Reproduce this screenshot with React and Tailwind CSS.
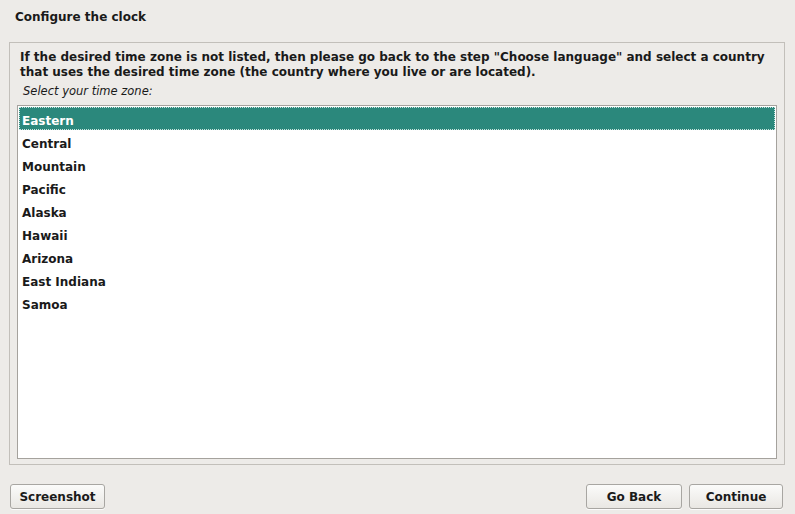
import React from "react";

const zones = ["Eastern","Central","Mountain","Pacific","Alaska","Hawaii","Arizona","East Indiana","Samoa"];

function Btn({ children, className = "" }) {
  return (
    <button className={"h-[25px] rounded-[3px] border border-[#a8a6a2] bg-gradient-to-b from-[#fbfbfa] to-[#e9e7e3] text-[12px] font-bold text-[#1a1a1a] leading-none shadow-[0_1px_0_rgba(255,255,255,0.8)] " + className}>
      {children}
    </button>
  );
}

export default function App() {
  return (
    <div className="w-[795px] h-[514px] bg-[#edebe8] flex flex-col text-[#1a1a1a]" style={{ fontFamily: '"DejaVu Sans", sans-serif' }}>
      <div className="pl-[15px] pt-[9px] h-[42px] text-[12px] leading-[16px] font-bold">Configure the clock</div>
      <div className="ml-[9px] mr-[10px] h-[423px] border border-[#c2bfba] flex flex-col pl-[10px] pr-[7px] pt-[7px] pb-[5px]">
        <p className="text-[12px] leading-[15px] font-bold">
          If the desired time zone is not listed, then please go back to the step "Choose language" and select a country that uses the desired time zone (the country where you live or are located).
        </p>
        <div className="pl-[3px] pt-[3px] text-[11.5px] leading-[16px] italic">Select your time zone:</div>
        <div className="mt-[6px] ml-[-3px] flex-1 border border-[#a5a29d] bg-white p-px">
          {zones.map((z, i) => (
            <div
              key={z}
              className={
                "h-[23px] pt-[4px] flex items-center text-[12px] font-bold " +
                (i === 0 ? "bg-[#2b887c] text-white border border-dotted border-[#c8e4de] pl-[2px]" : "pl-[3px]")
              }
            >
              {z}
            </div>
          ))}
        </div>
      </div>
      <div className="flex items-start pt-[19px] pl-[10px] pr-[12px]">
        <Btn className="w-[95px]">Screenshot</Btn>
        <div className="flex-1" />
        <Btn className="w-[96px]">Go Back</Btn>
        <Btn className="w-[94px] ml-[7px]">Continue</Btn>
      </div>
    </div>
  );
}
